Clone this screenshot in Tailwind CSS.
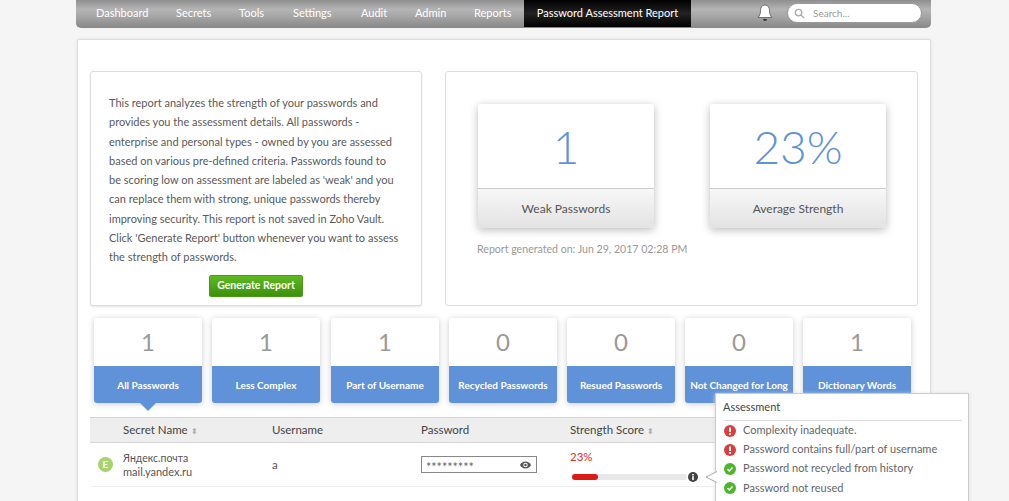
<!DOCTYPE html>
<html lang="en">
<head>
    <meta charset="UTF-8">
    <meta name="viewport" content="width=device-width, initial-scale=1.0">
    <title>Password Assessment Report</title>
    <script src="https://cdn.jsdelivr.net/npm/@tailwindcss/browser@4"></script>
</head>
<body class="bg-[#f5f5f5] h-[501px] overflow-hidden font-['Lato','Noto_Sans',sans-serif] text-[#555] relative">
    <!-- Navigation Bar -->
    <nav class="ml-[76px] w-[855px] h-[28px] rounded-b-[5px] bg-[linear-gradient(#8f8f8f,#b4b4b4_35%,#a6a6a6_60%,#8a8a8a)] border-b border-[#8a8a8a] flex items-center pb-[1px] text-[11px] text-white">
        <a class="ml-[20px] w-[80px]">Dashboard</a>
        <a class="w-[63px]">Secrets</a>
        <a class="w-[54px]">Tools</a>
        <a class="w-[68px]">Settings</a>
        <a class="w-[54px]">Audit</a>
        <a class="w-[59px]">Admin</a>
        <a class="w-[50px]">Reports</a>
        <a class="h-[27px] w-[167px] self-start bg-[linear-gradient(#000,#222_50%,#000)] flex items-center justify-center">Password Assessment Report</a>
        <svg class="ml-[66px] w-[16px] h-[18px]" viewBox="0 0 16 18"><path d="M8 1c-3 0-4.500 2.500-4.500 5.500 0 3-.7 5-2.300 7h13.600c-1.600-2-2.300-4-2.300-7C12.500 3.500 11 1 8 1z" fill="#fff" stroke="#555" stroke-width=".8"/><path d="M6 15h4a2 2 0 0 1-4 0z" fill="#333"/></svg>
        <div class="ml-[14px] w-[135px] h-[20px] rounded-full bg-white border border-[#999] flex items-center pl-[6px] text-[10px] text-[#999]">
            <svg class="w-[11px] h-[11px]" viewBox="0 0 12 12" fill="none" stroke="#aaa" stroke-width="1.500"><circle cx="5" cy="5" r="3.500"/><path d="M7.500 7.500 11 11"/></svg>
            <span class="ml-[8px]">Search...</span>
        </div>
    </nav>

    <!-- Main Content -->
    <main class="ml-[77px] mt-[11px] w-[854px] h-[480px] bg-white border border-[#ddd] rounded-[2px] shadow-[0_0_3px_#ddd] px-[12px] pt-[31px]">
        <div class="flex gap-[23px]">
            <!-- Intro panel -->
            <section class="w-[332px] h-[235px] border border-[#ddd] rounded-[3px] shadow-[0_1px_2px_#e5e5e5] pl-[18px] pr-[22px] pt-[21px] text-[11px] leading-[19.300px] text-[#5a5a5a]">
                <p>This report analyzes the strength of your passwords and provides you the assessment details. All passwords - enterprise and personal types - owned by you are assessed based on various pre-defined criteria. Passwords found to be scoring low on assessment are labeled as 'weak' and you can replace them with strong, unique passwords thereby improving security. This report is not saved in Zoho Vault. Click 'Generate Report' button whenever you want to assess the strength of passwords.</p>
                <div class="mt-[8px] ml-[4px] flex justify-center">
                    <button class="w-[94px] h-[22px] rounded-[2px] bg-[linear-gradient(#5dba1f,#3f8f0e)] border border-[#4a9a14] text-white text-[10.500px] font-bold">Generate Report</button>
                </div>
            </section>
            <!-- Summary panel -->
            <section class="w-[473px] h-[235px] border border-[#ddd] rounded-[3px] pl-[32px] pt-[32px]">
                <div class="flex gap-[56px]">
                    <div class="w-[176px] h-[124px] rounded-[3px] shadow-[0_2px_9px_#bbb] overflow-hidden">
                        <div class="h-[84px] flex items-center justify-center text-[46px] font-light text-[#5f92d9]">1</div>
                        <div class="h-[40px] border-t border-[#ccc] bg-[linear-gradient(#f7f7f7,#e3e3e3)] flex items-center justify-center text-[12px]">Weak Passwords</div>
                    </div>
                    <div class="w-[176px] h-[124px] rounded-[3px] shadow-[0_2px_9px_#bbb] overflow-hidden">
                        <div class="h-[84px] flex items-center justify-center text-[46px] font-light text-[#5f92d9]">23%</div>
                        <div class="h-[40px] border-t border-[#ccc] bg-[linear-gradient(#f7f7f7,#e3e3e3)] flex items-center justify-center text-[12px]">Average Strength</div>
                    </div>
                </div>
                <p class="-ml-[1px] mt-[14px] text-[10.600px] text-[#999]">Report generated on: Jun 29, 2017 02:28 PM</p>
            </section>
        </div>

        <!-- Category tabs -->
        <div class="mt-[12px] ml-[4px] flex gap-[10px]">
            <div class="relative w-[108px] h-[85px] rounded-[3px] shadow-[0_1px_6px_#ccc]">
                <div class="h-[48px] flex items-center justify-center text-[24px] text-[#999]">1</div>
                <div class="h-[37px] pt-[2px] rounded-b-[3px] bg-[#5f92d9] flex items-center justify-center text-white text-[10px] font-bold">All Passwords</div>
                <div class="absolute left-[46px] top-[85px] w-0 h-0 border-x-[8px] border-x-transparent border-t-[8px] border-t-[#5f92d9]"></div>
            </div>
            <div class="w-[108px] h-[85px] rounded-[3px] shadow-[0_1px_6px_#ccc]">
                <div class="h-[48px] flex items-center justify-center text-[24px] text-[#999]">1</div>
                <div class="h-[37px] pt-[2px] rounded-b-[3px] bg-[#5f92d9] flex items-center justify-center text-white text-[10px] font-bold">Less Complex</div>
            </div>
            <div class="ml-[1px] w-[108px] h-[85px] rounded-[3px] shadow-[0_1px_6px_#ccc]">
                <div class="h-[48px] flex items-center justify-center text-[24px] text-[#999]">1</div>
                <div class="h-[37px] pt-[2px] rounded-b-[3px] bg-[#5f92d9] flex items-center justify-center text-white text-[10px] font-bold">Part of Username</div>
            </div>
            <div class="w-[108px] h-[85px] rounded-[3px] shadow-[0_1px_6px_#ccc]">
                <div class="h-[48px] flex items-center justify-center text-[24px] text-[#999]">0</div>
                <div class="h-[37px] pt-[2px] rounded-b-[3px] bg-[#5f92d9] flex items-center justify-center text-white text-[10px] font-bold">Recycled Passwords</div>
            </div>
            <div class="w-[108px] h-[85px] rounded-[3px] shadow-[0_1px_6px_#ccc]">
                <div class="h-[48px] flex items-center justify-center text-[24px] text-[#999]">0</div>
                <div class="h-[37px] pt-[2px] rounded-b-[3px] bg-[#5f92d9] flex items-center justify-center text-white text-[10px] font-bold">Resued Passwords</div>
            </div>
            <div class="w-[108px] h-[85px] rounded-[3px] shadow-[0_1px_6px_#ccc]">
                <div class="h-[48px] flex items-center justify-center text-[24px] text-[#999]">0</div>
                <div class="h-[37px] pt-[2px] rounded-b-[3px] bg-[#5f92d9] flex items-center justify-center text-white text-[10px] font-bold">Not Changed for Long</div>
            </div>
            <div class="w-[108px] h-[85px] rounded-[3px] shadow-[0_1px_6px_#ccc]">
                <div class="h-[48px] flex items-center justify-center text-[24px] text-[#999]">1</div>
                <div class="h-[37px] pt-[2px] rounded-b-[3px] bg-[#5f92d9] flex items-center justify-center text-white text-[10px] font-bold">Dictionary Words</div>
            </div>
        </div>

        <!-- Table -->
        <div class="mt-[14px] h-[26px] bg-[#eee] border-y border-[#d5d5d5] flex items-center text-[11.500px] text-[#444]">
            <div class="ml-[33px] w-[149px]">Secret Name <span class="text-[8px] text-[#aaa]">⬍</span></div>
            <div class="w-[149px]">Username</div>
            <div class="w-[149px]">Password</div>
            <div>Strength Score <span class="text-[8px] text-[#aaa]">⬍</span></div>
        </div>
        <div class="h-[44px] border-b border-[#eee] flex items-center">
            <div class="ml-[8px] w-[15px] h-[15px] rounded-full bg-[#a5d46d] text-white text-[10px] font-bold flex items-center justify-center">E</div>
            <div class="ml-[10px] w-[149px] leading-[14px] text-[#555]">
                <div class="text-[10.500px]">Яндекс.почта</div>
                <div class="text-[11px]">mail.yandex.ru</div>
            </div>
            <div class="w-[149px] text-[11.500px]">a</div>
            <div class="w-[149px]">
                <div class="w-[116px] h-[17px] border border-[#888] flex items-center justify-between pl-[4px] pr-[5px] text-[12.500px] text-[#666]">
                    <span class="pt-[7px]">*********</span>
                    <svg class="w-[11px] h-[8px]" viewBox="0 0 22 16"><path d="M11 1C6 1 2 4 0 8c2 4 6 7 11 7s9-3 11-7c-2-4-6-7-11-7z" fill="#555"/><circle cx="11" cy="8" r="4.500" fill="#fff"/><circle cx="11" cy="8" r="2.500" fill="#555"/></svg>
                </div>
            </div>
            <div class="w-[145px] flex flex-col pt-[1px]">
                <span class="text-[11.500px] leading-[16px] text-[#e02a2a]">23%</span>
                <div class="mt-[7px] ml-[2px] flex items-center">
                    <div class="w-[115px] h-[6px] rounded-full bg-[#e8e8e8]">
                        <div class="h-full rounded-full bg-[#dd1b16]" style="width:23%"></div>
                    </div>
                    <svg class="ml-[1px] w-[10px] h-[10px]" viewBox="0 0 10 10"><circle cx="5" cy="5" r="5" fill="#444"/><rect x="4.200" y="4.200" width="1.600" height="3.800" fill="#fff"/><rect x="4.200" y="2" width="1.600" height="1.500" fill="#fff"/></svg>
                </div>
            </div>
        </div>
    </main>

    <!-- Assessment popover -->
    <div class="absolute left-[715px] top-[393px] w-[254px] h-[130px] bg-white border border-[#ccc] shadow-[0_1px_4px_#ddd] pl-[7px] pr-[6px] text-[11px] text-[#666]">
        <div class="h-[27px] border-b border-[#ddd] flex items-center text-[#444]">Assessment</div>
        <ul class="pl-[1px]">
            <li class="h-[19px] flex items-center gap-[7px]">
                <svg class="w-[12px] h-[12px]" viewBox="0 0 12 12"><circle cx="6" cy="6" r="6" fill="#dc3d3d"/><rect x="5" y="2.500" width="2" height="4.500" fill="#fff"/><rect x="5" y="8" width="2" height="1.800" fill="#fff"/></svg>
                <span>Complexity inadequate.</span>
            </li>
            <li class="h-[19px] flex items-center gap-[7px]">
                <svg class="w-[12px] h-[12px]" viewBox="0 0 12 12"><circle cx="6" cy="6" r="6" fill="#dc3d3d"/><rect x="5" y="2.500" width="2" height="4.500" fill="#fff"/><rect x="5" y="8" width="2" height="1.800" fill="#fff"/></svg>
                <span>Password contains full/part of username</span>
            </li>
            <li class="h-[19px] flex items-center gap-[7px]">
                <svg class="w-[12px] h-[12px]" viewBox="0 0 12 12"><circle cx="6" cy="6" r="6" fill="#4fb52a"/><path d="M3.500 6.200 5.300 8l3.200-3.500" fill="none" stroke="#fff" stroke-width="1.500"/></svg>
                <span>Password not recycled from history</span>
            </li>
            <li class="h-[20px] flex items-center gap-[7px]">
                <svg class="w-[12px] h-[12px]" viewBox="0 0 12 12"><circle cx="6" cy="6" r="6" fill="#4fb52a"/><path d="M3.500 6.200 5.300 8l3.200-3.500" fill="none" stroke="#fff" stroke-width="1.500"/></svg>
                <span>Password not reused</span>
            </li>
            <li class="h-[20px] flex items-center gap-[7px]">
                <svg class="w-[12px] h-[12px]" viewBox="0 0 12 12"><circle cx="6" cy="6" r="6" fill="#4fb52a"/></svg>
            </li>
        </ul>
        <svg class="absolute left-[-11px] top-[77px] w-[12px] h-[12px]" viewBox="0 0 12 12"><path d="M12 0.500 1 6l11 5.500z" fill="#fff"/><path d="M12 0.500 1 6l11 5.500" fill="none" stroke="#aaa"/></svg>
    </div>
</body>
</html>
